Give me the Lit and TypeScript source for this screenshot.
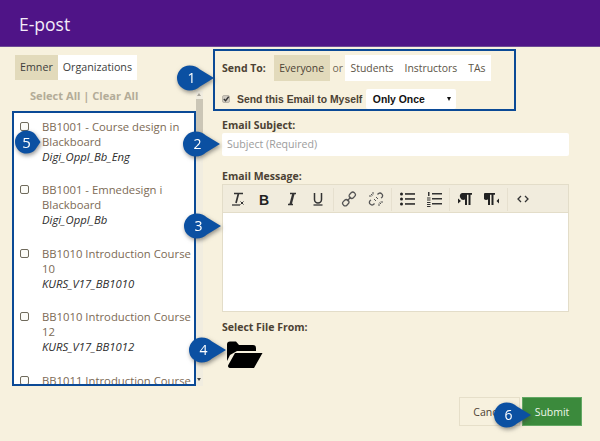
import { LitElement, html, css, svg } from "lit";
import { customElement } from "lit/decorators.js";

const courses = [
  ["BB1001 - Course design in Blackboard", "Digi_Oppl_Bb_Eng"],
  ["BB1001 - Emnedesign i Blackboard", "Digi_Oppl_Bb"],
  ["BB1010 Introduction Course 10", "KURS_V17_BB1010"],
  ["BB1010 Introduction Course 12", "KURS_V17_BB1012"],
  ["BB1011 Introduction Course 13", "KURS_V17_BB1013"],
];

const callouts: [number, number, number][] = [
  [1, 177, 65],
  [2, 183, 131],
  [3, 184, 213],
  [4, 189, 337],
  [6, 494, 402],
];

const icons = [
  [
    svg`<path d="M5 2.5h9M9.5 2.5 7 12" fill="none" stroke="#333" stroke-width="1.7"/><path d="M3 14h8" stroke="#333" stroke-width="1.3"/><path d="M11.5 10.5l3 3M14.5 10.5l-3 3" stroke="#333"/>`,
    svg`<text x="8" y="13.5" text-anchor="middle" font-family="Liberation Sans" font-weight="700" font-size="14" fill="#222">B</text>`,
    svg`<path d="M7 2.5h6M5 13.5h5" stroke="#333" stroke-width="1.3" fill="none"/><path d="M10.5 2.5 7.5 13.5" stroke="#333" stroke-width="2.4"/>`,
    svg`<path d="M4.5 2v6.5a3.5 3.5 0 0 0 7 0V2" fill="none" stroke="#333" stroke-width="1.5"/><path d="M3.5 14h9" stroke="#333" stroke-width="1.3"/>`,
  ],
  [
    svg`<g fill="none" stroke="#555" stroke-width="1.3"><rect x="8" y="1.8" width="6.5" height="5" rx="2.3" transform="rotate(-45 11.2 4.3)"/><rect x="1.5" y="9.2" width="6.5" height="5" rx="2.3" transform="rotate(-45 4.8 11.7)"/><path d="M6 10l4-4"/></g>`,
    svg`<g fill="none" stroke="#555" stroke-width="1.3"><path d="M9.5 3.5l1-1a2.6 2.6 0 0 1 3.6 3.6l-1 1M6.5 12.5l-1 1a2.6 2.6 0 0 1-3.6-3.6l1-1"/><path d="M5 1v2.5M1 5h2.5M11 15v-2.5M15 11h-2.5M3 3l1.5 1.5M13 13l-1.500-1.500" stroke-width="1"/><path d="M8 6l2 2M6 8l2 2" stroke-width="1"/></g>`,
  ],
  [
    svg`<g fill="#222"><circle cx="2.500" cy="3" r="1.500"/><circle cx="2.500" cy="8" r="1.500"/><circle cx="2.500" cy="13" r="1.500"/><rect x="6" y="2.200" width="10" height="1.500"/><rect x="6" y="7.200" width="10" height="1.500"/><rect x="6" y="12.200" width="10" height="1.500"/></g>`,
    svg`<g fill="#333"><rect x="6" y="2" width="10" height="1.500"/><rect x="6" y="7" width="10" height="1.500"/><rect x="6" y="12" width="10" height="1.500"/><rect x="2" y="1" width="1.500" height="4"/><rect x="1" y="6.500" width="3.500" height="1"/><rect x="1" y="8.500" width="3.500" height="1"/><rect x="1" y="11" width="3.500" height="1"/><rect x="1" y="13" width="3.500" height="1"/><rect x="1" y="15" width="3.500" height="1"/></g>`,
  ],
  [
    svg`<g fill="#222"><path d="M1 7.500 4 10 1 12.500z"/><path d="M5 2h10v1.800h-1.500V14h-2V3.800H10V14H8V8.500A3.300 3.300 0 0 1 5 2z"/></g>`,
    svg`<g fill="#222"><path d="M15 7.500 12.500 10 15 12.500z"/><path d="M1 2h10v1.800H9.500V14h-2V3.800H6V14H4V8.500A3.300 3.300 0 0 1 1 2z"/></g>`,
  ],
  [svg`<path d="M6 5 3 8 6 11M10 5 13 8 10 11" fill="none" stroke="#333" stroke-width="1.300"/>`],
];

@customElement("app-root")
export class AppRoot extends LitElement {
  static styles = css`
    :host {
      display: block;
      position: relative;
      width: 600px;
      height: 441px;
      overflow: hidden;
      background: #f7f1de;
      font-family: "Open Sans", sans-serif;
      color: #4c4234;
    }
    .header {
      height: 47px;
      box-sizing: border-box;
      padding: 8px 19px 0;
      background: #4f1487;
      color: #f3ecf8;
      font-size: 17.500px;
      line-height: 32px;
      border-bottom: 1px solid #6d4b95;
    }
    .main {
      display: flex;
      height: 394px;
    }
    .left {
      width: 213px;
      flex: none;
      box-sizing: border-box;
      padding: 8px 0 0 12px;
    }
    .tabs {
      display: inline-flex;
      height: 25px;
      margin-left: 3px;
      background: #fff;
      font-size: 10.700px;
      line-height: 25px;
      color: #3d3d3d;
      vertical-align: top;
    }
    .tab {
      padding: 0 5px;
    }
    .tab.on {
      background: #e2dabb;
    }
    .select {
      margin: 6px 0 0 18px;
      height: 20px;
      font-size: 11.100px;
      font-weight: 700;
      line-height: 20px;
      color: #b3ac98;
    }
    .listwrap {
      display: flex;
      height: 275px;
      margin-top: 5px;
    }
    .list {
      width: 184px;
      height: 275px;
      flex: none;
      box-sizing: border-box;
      border: 2px solid #0b4a96;
      background: #fff;
      overflow: hidden;
      padding: 5.500px 0 0 0;
    }
    .item {
      display: flex;
      height: 63.500px;
    }
    .box {
      width: 9px;
      height: 9px;
      box-sizing: border-box;
      flex: none;
      margin: 3px 0 0 6px;
      border: 1.500px solid #6f6a5c;
      border-radius: 2px;
      background: #fbfbf8;
    }
    .txt {
      margin-left: 13px;
      width: 150px;
      font-size: 11.300px;
      line-height: 15px;
      color: #7c6a55;
    }
    .txt i {
      display: block;
      color: #2b2b2b;
    }
    .scroll {
      width: 7px;
      height: 295px;
      margin-top: -20px;
      flex: none;
      position: relative;
      background: #f1ede0;
    }
    .thumb {
      position: absolute;
      left: 0;
      top: 8px;
      width: 7px;
      height: 45px;
      background: #cbc6b6;
    }
    .arrow {
      position: absolute;
      left: 1px;
      width: 0;
      height: 0;
      border-left: 2.500px solid transparent;
      border-right: 2.500px solid transparent;
    }
    .arrow.up {
      top: 2px;
      border-bottom: 3px solid #a9a59a;
    }
    .arrow.down {
      bottom: 5px;
      border-top: 3px solid #444;
    }
    .right {
      flex: 1;
      padding-top: 2px;
    }
    .sendbox {
      width: 303px;
      height: 62px;
      box-sizing: border-box;
      border: 2px solid #0b4a96;
      padding: 4px 0 0 7px;
    }
    .row {
      display: flex;
      align-items: center;
    }
    .label {
      font-size: 10.500px;
      font-weight: 700;
      white-space: nowrap;
      color: #4c4234;
    }
    .opt {
      font-size: 10.400px;
      line-height: 26px;
      padding: 0 5.500px;
      color: #5c5446;
    }
    .opt.on {
      background: #e2dabb;
      margin-left: 8px;
      color: #4c4234;
    }
    .or {
      font-size: 10.400px;
      margin: 0 2px 0 3px;
      color: #6f6755;
    }
    .group {
      display: flex;
      background: #fff;
    }
    .me {
      margin-top: 8px;
      height: 20px;
    }
    .check {
      width: 8px;
      height: 8px;
      box-sizing: border-box;
      border-radius: 2px;
      background: #cfcac0;
      border: 1px solid #b9b4a8;
      display: flex;
      margin-right: 7px;
    }
    .check svg {
      flex: none;
      margin: -1px;
    }
    .metext {
      font-family: "Liberation Sans", sans-serif;
      font-size: 10.400px;
      font-weight: 700;
      white-space: nowrap;
      color: #4c4234;
    }
    .sel {
      margin-left: 3.500px;
      width: 90px;
      height: 20px;
      box-sizing: border-box;
      background: #fff;
      border-radius: 2px;
      padding-left: 7px;
      font-family: "Liberation Sans", sans-serif;
      font-size: 10.400px;
      font-weight: 700;
      line-height: 21px;
      color: #111;
      position: relative;
    }
    .sel::after {
      content: "";
      position: absolute;
      right: 5px;
      top: 8px;
      border-left: 2.500px solid transparent;
      border-right: 2.500px solid transparent;
      border-top: 4px solid #111;
    }
    .field {
      margin-left: 9px;
      width: 347px;
    }
    .f1 {
      margin-top: 6px;
    }
    .f2 {
      margin-top: 11.500px;
    }
    .fl {
      font-size: 10.500px;
      font-weight: 700;
      line-height: 16px;
      color: #4c4234;
    }
    .input {
      height: 23px;
      background: #fff;
      border-radius: 2px;
      font-size: 10.600px;
      line-height: 23px;
      padding-left: 5px;
      color: #9c9c9c;
    }
    .editor {
      height: 128px;
      box-sizing: border-box;
      border: 1px solid #e3ddc9;
      background: #fff;
    }
    .toolbar {
      display: flex;
      height: 28px;
      background: #f1ecdd;
      border-bottom: 1px solid #e3ddc9;
      box-sizing: border-box;
    }
    .tg {
      display: flex;
      align-items: center;
      gap: 11px;
      padding: 0 7px;
      border-right: 1px solid #e6e0cf;
      margin: 3px 0 1px;
    }
    .tg:first-child {
      padding-left: 6px;
    }
    .tg:last-child {
      border-right: none;
    }
    .tg svg {
      width: 16px;
      height: 16px;
      display: block;
    }
    .filelabel {
      margin-top: 7px;
      margin-left: 9px;
    }
    .folder {
      display: block;
      margin: 6px 0 0 14px;
      width: 36px;
      height: 28px;
    }
    .actions {
      position: absolute;
      right: 18px;
      bottom: 15px;
      display: flex;
      gap: 2px;
    }
    .btn {
      height: 29px;
      box-sizing: border-box;
      font-size: 10.500px;
      line-height: 28px;
      text-align: center;
    }
    .cancel {
      width: 61px;
      border: 1px solid #e6dfc9;
      color: #4c4234;
    }
    .submit {
      width: 60px;
      background: #3b8a3c;
      border: 1px solid #64a864;
      color: #eef6ea;
    }
    .callout {
      position: absolute;
      width: 38px;
      height: 26px;
      filter: drop-shadow(1px 2px 2px rgba(60, 60, 60, 0.55));
    }
    .callout svg {
      display: block;
      width: 38px;
      height: 26px;
    }
    .callout span {
      position: absolute;
      left: 2px;
      top: 0;
      width: 25px;
      text-align: center;
      font-size: 14px;
      line-height: 26px;
      color: #fff;
    }
    .callout.small {
      left: 15px;
      top: 130px;
      width: 26px;
      height: 24px;
    }
    .callout.small svg {
      width: 26px;
      height: 24px;
    }
    .callout.small span {
      left: 0;
      width: 23px;
      font-size: 15px;
      line-height: 25px;
    }
  `;

  render() {
    return html`
      <div class="header">E-post</div>
      <div class="main">
        <div class="left">
          <div class="tabs">
            <div class="tab on">Emner</div>
            <div class="tab">Organizations</div>
          </div>
          <div class="select">Select All | Clear All</div>
          <div class="listwrap">
            <div class="list">
              ${courses.map(
                ([name, code]) => html`<div class="item">
                  <div class="box"></div>
                  <div class="txt">${name}<i>${code}</i></div>
                </div>`
              )}
            </div>
            <div class="scroll">
              <div class="arrow up"></div>
              <div class="thumb"></div>
              <div class="arrow down"></div>
            </div>
          </div>
        </div>
        <div class="right">
          <div class="sendbox">
            <div class="row">
              <span class="label">Send To:</span>
              <span class="opt on">Everyone</span>
              <span class="or">or</span>
              <div class="group">
                <span class="opt">Students</span>
                <span class="opt">Instructors</span>
                <span class="opt">TAs</span>
              </div>
            </div>
            <div class="row me">
              <span class="check">
                <svg viewBox="0 0 9 9" width="8" height="8"><path d="M2 4.500 4 6.500 7.500 2" fill="none" stroke="#333" stroke-width="1.500" /></svg>
              </span>
              <span class="metext">Send this Email to Myself</span>
              <div class="sel">Only Once</div>
            </div>
          </div>
          <div class="field f1">
            <div class="fl">Email Subject:</div>
            <div class="input">Subject (Required)</div>
          </div>
          <div class="field f2">
            <div class="fl">Email Message:</div>
            <div class="editor">
              <div class="toolbar">
                ${icons.map(
                  (g) => html`<div class="tg">
                    ${g.map((p) => html`<svg viewBox="0 0 16 16">${p}</svg>`)}
                  </div>`
                )}
              </div>
            </div>
          </div>
          <div class="fl filelabel">Select File From:</div>
          <svg class="folder" viewBox="0 0 36 28">
            <path d="M0 3.500A3 3 0 0 1 3 .5h6l3 3.500h14a3 3 0 0 1 3 3v3H10L3 14 0 20z" fill="#000" />
            <path d="M8 12h27.500L27 27H3a2 2 0 0 1-1.700-3z" fill="#000" />
          </svg>
        </div>
      </div>
      <div class="actions">
        <div class="btn cancel">Cancel</div>
        <div class="btn submit">Submit</div>
      </div>
      ${callouts.map(
        ([n, x, y]) => html`<div class="callout" style="left:${x}px;top:${y}px">
          <svg viewBox="0 0 38 26">
            <path d="M12.500.5C17 .5 20 2 23 4.500L37 13 23 21.500C20 24 17 25.500 12.500 25.500A12.500 12.500 0 0 1 12.500.5Z" fill="#0b50a2" />
          </svg>
          <span>${n}</span>
        </div>`
      )}
      <div class="callout small">
        <svg viewBox="0 0 26 24">
          <path d="M11.500.5C15 .5 18 2 20 4L25.500 12 20 20C18 22 15 23.500 11.500 23.500A11.500 11.500 0 0 1 11.500.5Z" fill="#0b50a2" />
        </svg>
        <span>5</span>
      </div>
    `;
  }
}
